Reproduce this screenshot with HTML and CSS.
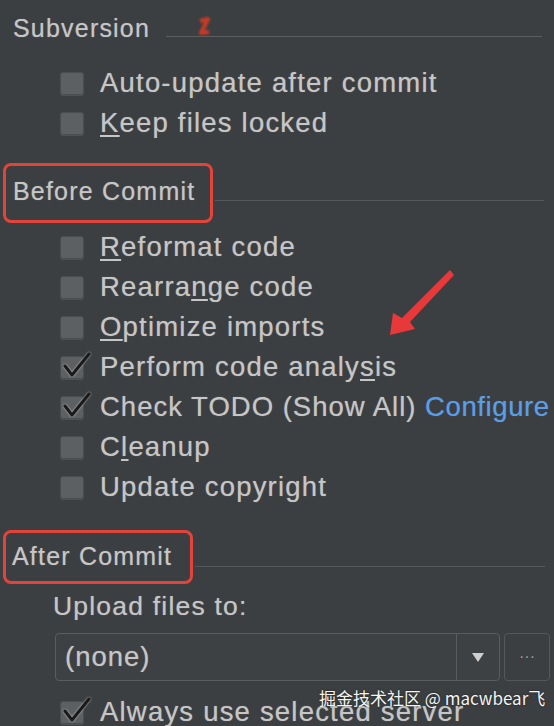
FILE: index.html
```html
<!DOCTYPE html>
<html>
<head>
<meta charset="utf-8">
<link rel="stylesheet" href="styles.css">
</head>
<body>
<div class="panel">
  <div class="hdr hdr-plain">
    <span class="hdr-title">Subversion</span>
    <span class="hdr-line line-svn"></span>
    <svg class="scribble" width="18" height="24" viewBox="0 0 18 24"><path d="M4 7 L12 5 L5 19 L13 18" fill="none" stroke="#c93a28" stroke-width="4" stroke-linejoin="round"/></svg>
  </div>
  <div class="rows rows-svn">
    <div class="row"><span class="cb"></span><span class="lbl">Auto-update after commit</span></div>
    <div class="row"><span class="cb"></span><span class="lbl"><u>K</u>eep files locked</span></div>
  </div>

  <div class="hdr hdr-before">
    <span class="hdr-box box-before">Before Commit</span>
    <span class="hdr-line line-before"></span>
  </div>
  <div class="rows rows-before">
    <div class="row"><span class="cb"></span><span class="lbl"><u>R</u>eformat code</span></div>
    <div class="row"><span class="cb"></span><span class="lbl">Rearra<u>n</u>ge code</span></div>
    <div class="row"><span class="cb"></span><span class="lbl"><u>O</u>ptimize imports</span></div>
    <div class="row"><span class="cb checked"><svg class="tick" width="30" height="30" viewBox="0 0 30 30"><path d="M3 13 L10 22 L27 1" fill="none" stroke="#1a1a1a" stroke-width="3" stroke-linecap="round" stroke-linejoin="round"/></svg></span><span class="lbl">Perform code analy<u>s</u>is</span></div>
    <div class="row"><span class="cb checked"><svg class="tick" width="30" height="30" viewBox="0 0 30 30"><path d="M3 13 L10 22 L27 1" fill="none" stroke="#1a1a1a" stroke-width="3" stroke-linecap="round" stroke-linejoin="round"/></svg></span><span class="lbl lbl-tight">Check TODO (Show All) <span class="link">Configure</span></span></div>
    <div class="row"><span class="cb"></span><span class="lbl">C<u>l</u>eanup</span></div>
    <div class="row"><span class="cb"></span><span class="lbl">Update copyright</span></div>
  </div>

  <div class="hdr hdr-after">
    <span class="hdr-box box-after">After Commit</span>
    <span class="hdr-line line-after"></span>
  </div>
  <div class="upload-lbl">Upload files to:</div>
  <div class="combo-row">
    <div class="combo">
      <span class="combo-val">(none)</span>
      <span class="combo-drop"><span class="tri"></span></span>
    </div>
    <div class="more-btn">···</div>
  </div>
  <div class="row row-last"><span class="cb checked"><svg class="tick" width="30" height="30" viewBox="0 0 30 30"><path d="M3 13 L10 22 L27 1" fill="none" stroke="#1a1a1a" stroke-width="3" stroke-linecap="round" stroke-linejoin="round"/></svg></span><span class="lbl">Always use selected server</span></div>

  <svg class="arrow" width="80" height="80" viewBox="0 0 80 80"><polygon points="70,5 74,10 30,57 35,64 10,70 13,48 22,53" fill="#e8393a"/></svg>
  <div class="watermark">掘金技术社区 @ macwbear飞</div>
</div>
</body>
</html>
```
FILE: styles.css
```css
html, body {
  margin: 0;
  padding: 0;
  background: #3c3f41;
  overflow: hidden;
}
.panel {
  position: relative;
  width: 554px;
  height: 726px;
  overflow: hidden;
  font-family: "Liberation Sans", Arial, sans-serif;
  color: #c6c6c6;
  font-size: 27.5px;
  letter-spacing: 1.2px;
  text-shadow: 0 0 1px rgba(198,198,198,0.55);
  white-space: nowrap;
}
.hdr {
  display: flex;
  align-items: center;
  position: relative;
}
.hdr-plain {
  height: 56px;
}
.hdr-title {
  padding-left: 13px;
  font-size: 25px;
  letter-spacing: 1.2px;
}
.hdr-line {
  flex: 1;
  height: 1px;
  background: #56595b;
}
.line-svn {
  margin: 16px 12px 0 16px;
  background: #5c5f61;
}
.scribble {
  position: absolute;
  left: 196px;
  top: 14px;
  filter: blur(1px);
}
.rows-svn {
  padding-top: 7px;
}
.row {
  display: flex;
  align-items: center;
  height: 40px;
  padding-left: 60px;
  gap: 16px;
}
.cb {
  position: relative;
  width: 24px;
  height: 23px;
  box-sizing: border-box;
  background: #5d6062;
  border: 1px solid #4b4e50;
  border-radius: 3px;
  box-shadow: 0 1px 0 #4f5254;
  flex: none;
}
.tick {
  position: absolute;
  left: 1px;
  top: -4px;
  overflow: visible;
  filter: drop-shadow(0 0 0.8px rgba(220,220,220,0.8));
}
.lbl u {
  text-decoration-thickness: 1.5px;
  text-underline-offset: 3px;
}
.lbl-tight {
  letter-spacing: 1px;
}
.link {
  color: #5b9ee8;
  letter-spacing: 0.6px;
  text-shadow: 0 0 1px rgba(91,158,232,0.5);
}
.hdr-before {
  margin-top: 20px;
  height: 60px;
}
.hdr-box {
  box-sizing: border-box;
  margin-left: 3px;
  border: 3px solid #e2443c;
  border-radius: 8px;
  display: flex;
  align-items: center;
  font-size: 25px;
  letter-spacing: 1.2px;
}
.box-before {
  width: 210px;
  height: 60px;
  padding: 0 0 4px 7px;
}
.line-before {
  margin: 14px 10px 0 2px;
}
.rows-before {
  margin-top: 4px;
}
.hdr-after {
  margin-top: 23px;
  height: 54px;
}
.box-after {
  width: 190px;
  height: 54px;
  padding: 0 0 2px 6px;
}
.line-after {
  margin: 18px 9px 0 2px;
}
.upload-lbl {
  height: 44px;
  display: flex;
  align-items: center;
  padding-left: 53px;
  font-size: 26.5px;
}
.combo-row {
  display: flex;
  margin-top: 5px;
  padding-left: 55px;
  gap: 4px;
  height: 48px;
}
.combo {
  box-sizing: border-box;
  width: 445px;
  height: 48px;
  border: 1.5px solid #5a5d5f;
  border-radius: 4px;
  display: flex;
  align-items: center;
  background: #3e4143;
}
.combo-val {
  flex: 1;
  padding-left: 9px;
  letter-spacing: 1px;
}
.combo-drop {
  box-sizing: border-box;
  width: 43px;
  height: 100%;
  border-left: 1.5px solid #5a5d5f;
  display: flex;
  align-items: center;
  justify-content: center;
}
.tri {
  width: 0;
  height: 0;
  border-left: 6px solid transparent;
  border-right: 6px solid transparent;
  border-top: 9px solid #cfcfcf;
}
.more-btn {
  box-sizing: border-box;
  width: 46px;
  height: 48px;
  border: 1.5px solid #55585a;
  border-radius: 4px;
  display: flex;
  align-items: center;
  justify-content: center;
  color: #9a9a9a;
  font-size: 16px;
  letter-spacing: 0;
  text-shadow: none;
}
.row-last {
  margin-top: 11px;
}
.arrow {
  position: absolute;
  left: 380px;
  top: 265px;
  filter: blur(0.7px);
}
.watermark {
  position: absolute;
  left: 319px;
  top: 685px;
  font-family: "Noto Sans CJK SC", "Liberation Sans", sans-serif;
  font-size: 17px;
  letter-spacing: 0;
  color: #f4f4f4;
  text-shadow: 0 0 2px rgba(0,0,0,0.6);
}
```
